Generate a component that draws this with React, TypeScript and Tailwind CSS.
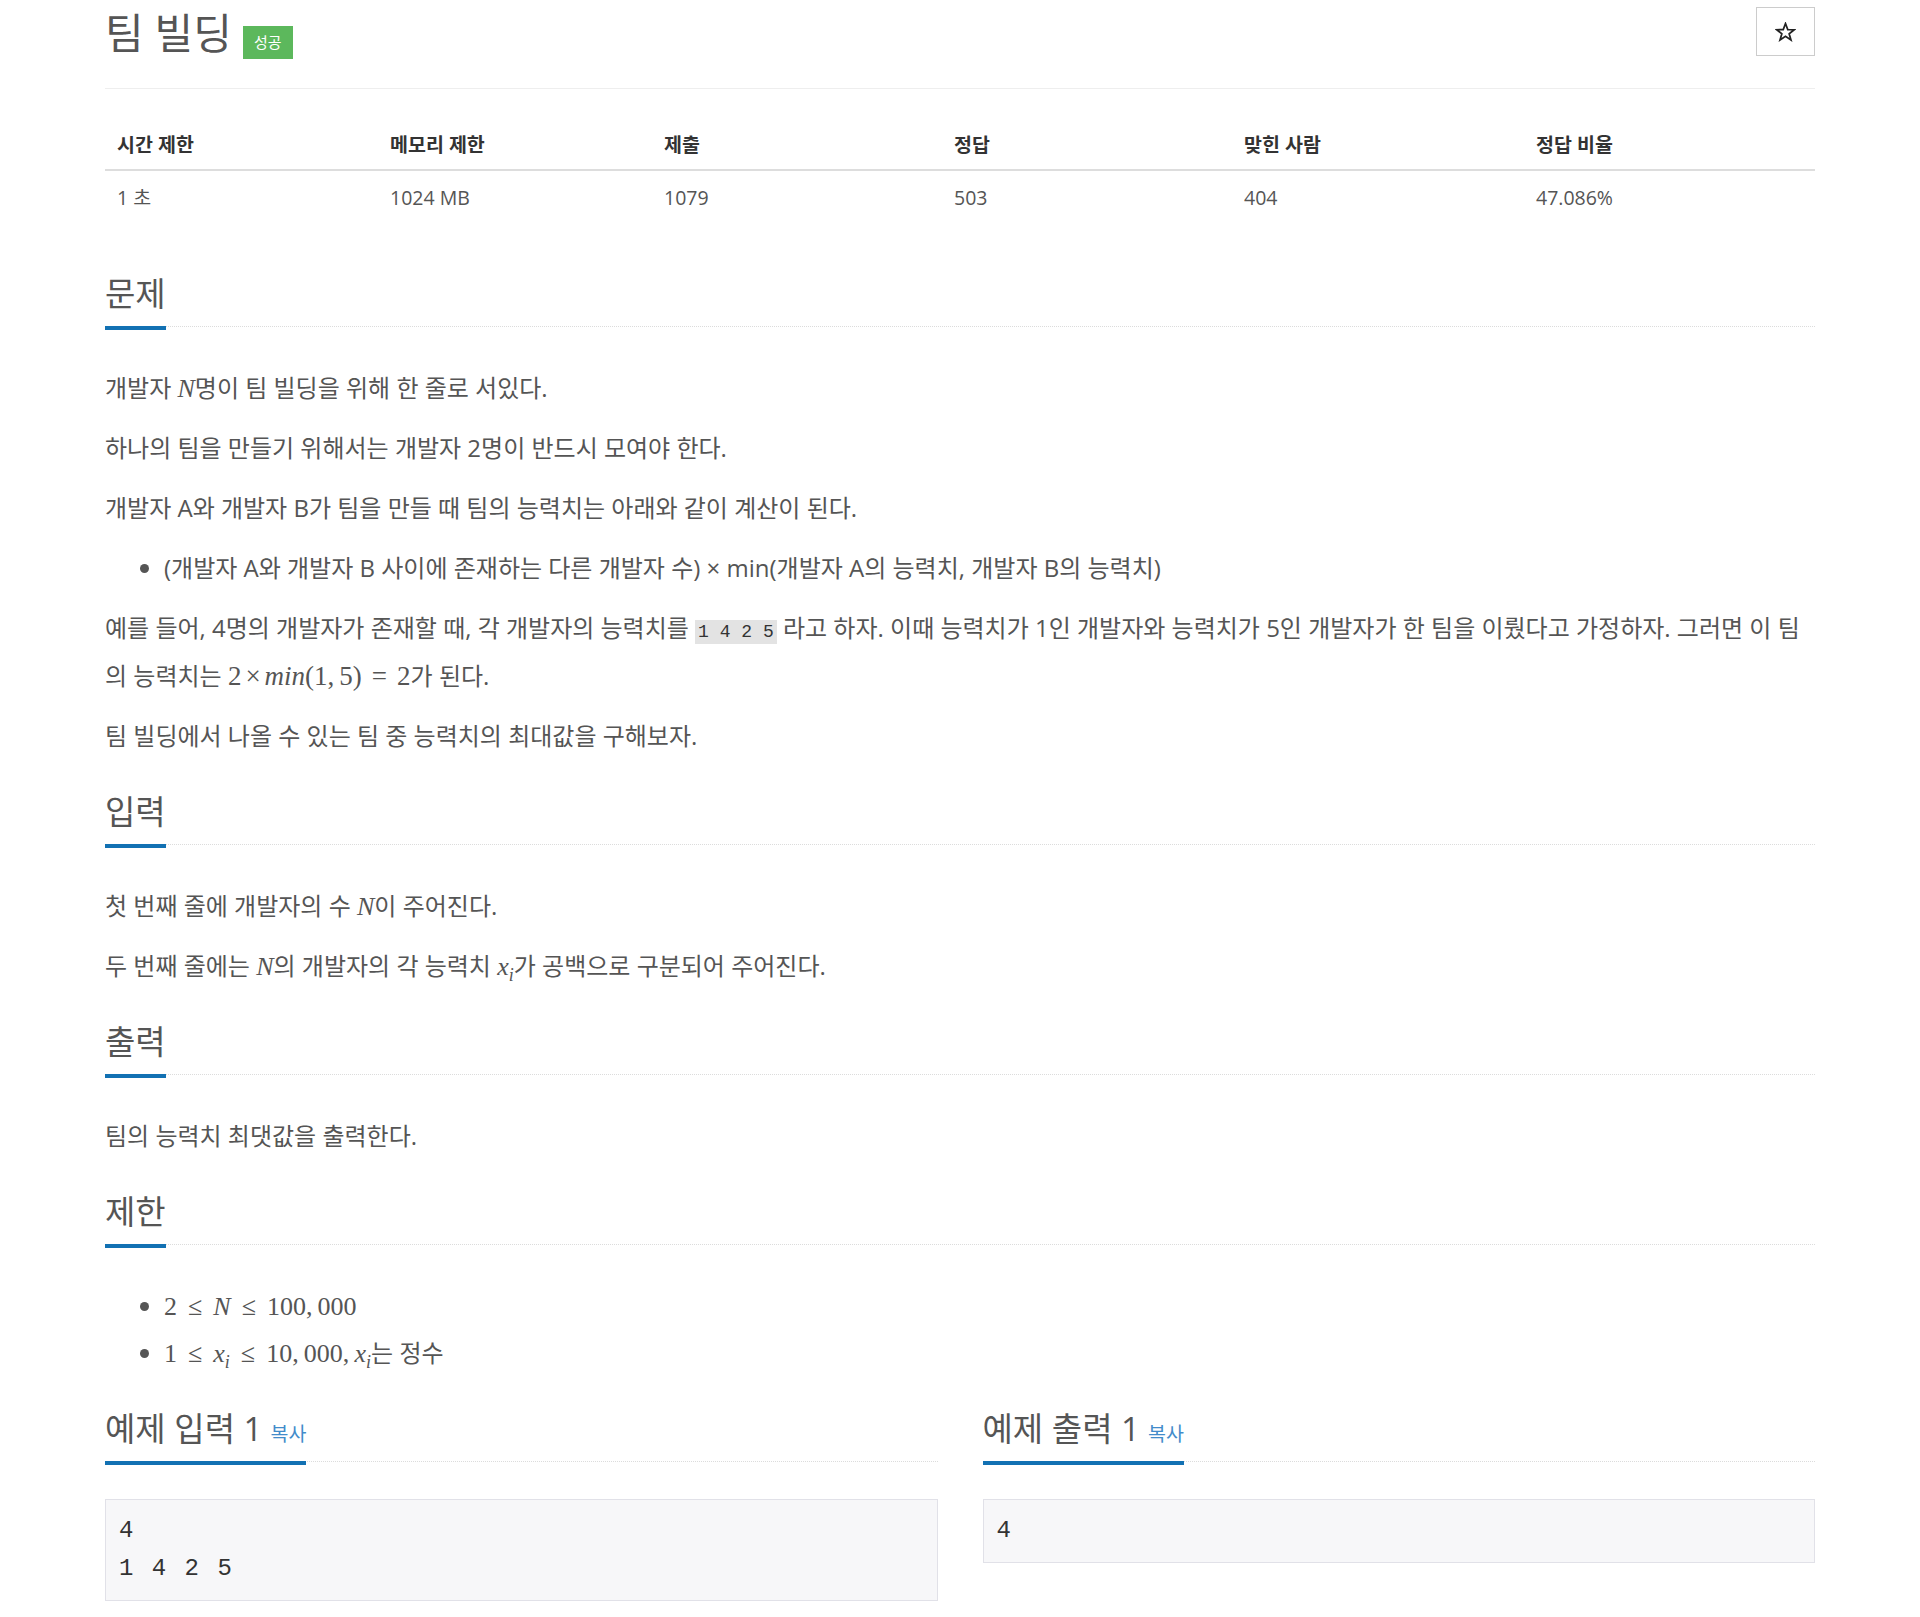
import type { ReactNode } from "react";

const SANS = "font-['Open_Sans','Noto_Sans_CJK_KR',sans-serif]";
const SERIF = "font-['Liberation_Serif','Times_New_Roman',serif]";

function M({ children }: { children: ReactNode }) {
  return <span className={`${SERIF} text-[26px] leading-none`}>{children}</span>;
}

function V({ children }: { children: ReactNode }) {
  return <i className={`${SERIF} text-[26px] leading-none`}>{children}</i>;
}

function Xi() {
  return (
    <span className={`${SERIF} text-[26px] leading-none`}>
      <i>x</i>
      <i className="align-sub text-[18px] leading-none">i</i>
    </span>
  );
}

// relation sign with TeX-like thick spacing
function Rel({ children }: { children: ReactNode }) {
  return <span className="px-[11px]">{children}</span>;
}

function Headline({ children }: { children: ReactNode }) {
  return (
    <div className="mt-[20px] mb-[37px] flex border-b border-dotted border-[#dcdcdc]">
      <h2 className="-mb-[4px] border-b-4 border-[#1271b3] pb-[12px] text-[33px] leading-[40px] text-[#555]">
        {children}
      </h2>
    </div>
  );
}

function Copy() {
  return <a className="ml-[8px] cursor-pointer text-[19.5px] leading-none text-[#428bca]">복사</a>;
}

const heads = ["시간 제한", "메모리 제한", "제출", "정답", "맞힌 사람", "정답 비율"];
const vals = ["1 초", "1024 MB", "1079", "503", "404", "47.086%"];

export default function App() {
  return (
    <div className={`${SANS} min-h-[1617px] bg-white px-[105px] text-[#555]`}>
      <div className="flex h-[89px] items-start justify-between border-b border-[#eee]">
        <div className="flex items-start">
          <h1 className="mt-[10px] text-[42px] leading-[46px] text-[#555]">팀 빌딩</h1>
          <span className="mt-[26px] ml-[11px] flex h-[33px] w-[50px] items-center justify-center bg-[#5cb85c] text-[15px] text-white">
            성공
          </span>
        </div>
        <button className="mt-[7px] flex h-[49px] w-[59px] items-center justify-center border border-[#ccc] bg-white">
          <svg width="21" height="20" viewBox="0 0 24 23" fill="none" stroke="#222" strokeWidth="2" strokeLinejoin="miter">
            <path d="M12 1.8 L14.6 8.7 L22 8.9 L16.2 13.5 L18.3 20.7 L12 16.5 L5.7 20.7 L7.8 13.5 L2 8.9 L9.4 8.7 Z" />
          </svg>
        </button>
      </div>

      <div className="mt-[31px] mb-[33px] grid grid-cols-[273px_274px_290px_290px_292px_1fr] text-[19.5px] leading-[25px]">
        {heads.map((h) => (
          <div key={h} className="border-b-2 border-[#ddd] px-[12px] py-[12px] font-bold text-[#333]">
            {h}
          </div>
        ))}
        {vals.map((v) => (
          <div key={v} className="px-[12px] pt-[14px] pb-[11px] text-[#555]">
            {v}
          </div>
        ))}
      </div>

      <div className="flex flex-col text-[24px] leading-[47.5px]">
        <Headline>문제</Headline>
        <p className="mb-[12.5px]">
          개발자 <V>N</V>명이 팀 빌딩을 위해 한 줄로 서있다.
        </p>
        <p className="mb-[12.5px]">하나의 팀을 만들기 위해서는 개발자 2명이 반드시 모여야 한다.</p>
        <p className="mb-[12.5px]">개발자 A와 개발자 B가 팀을 만들 때 팀의 능력치는 아래와 같이 계산이 된다.</p>
        <ul className="mb-[12.5px] list-disc pl-[59px]">
          <li>(개발자 A와 개발자 B 사이에 존재하는 다른 개발자 수) × min(개발자 A의 능력치, 개발자 B의 능력치)</li>
        </ul>
        <p className="mb-[12.5px] whitespace-nowrap">
          예를 들어, 4명의 개발자가 존재할 때, 각 개발자의 능력치를{" "}
          <code className="bg-[#e3e3e3] px-[3px] py-[2px] font-['Liberation_Mono',monospace] text-[18px] leading-none text-[#333]">
            1 4 2 5
          </code>{" "}
          라고 하자. 이때 능력치가 1인 개발자와 능력치가 5인 개발자가 한 팀을 이뤘다고 가정하자. 그러면 이 팀
          <br />의 능력치는{" "}
          <span className={`${SERIF} text-[27px] leading-none`}>
            2<span className="px-[4px]">×</span>
            <i>min</i>(1,<span className="pl-[5px]">5</span>)<span className="px-[10px]">=</span>2
          </span>
          가 된다.
        </p>
        <p className="mb-[12.5px]">팀 빌딩에서 나올 수 있는 팀 중 능력치의 최대값을 구해보자.</p>

        <Headline>입력</Headline>
        <p className="mb-[12.5px]">
          첫 번째 줄에 개발자의 수 <V>N</V>이 주어진다.
        </p>
        <p className="mb-[12.5px]">
          두 번째 줄에는 <V>N</V>의 개발자의 각 능력치 <Xi />가 공백으로 구분되어 주어진다.
        </p>

        <Headline>출력</Headline>
        <p className="mb-[12.5px]">팀의 능력치 최댓값을 출력한다.</p>

        <Headline>제한</Headline>
        <ul className="mb-[12.5px] list-disc pl-[59px]">
          <li>
            <M>
              2<Rel>≤</Rel>
              <i>N</i>
              <Rel>≤</Rel>100,&thinsp;000
            </M>
          </li>
          <li>
            <M>
              1<Rel>≤</Rel>
            </M>
            <Xi />
            <M>
              <Rel>≤</Rel>10,&thinsp;000,&thinsp;
            </M>
            <Xi />는 정수
          </li>
        </ul>

        <div className="grid grid-cols-2 gap-x-[45px]">
          <div className="flex flex-col">
            <Headline>
              예제 입력 1<Copy />
            </Headline>
            <pre className="m-0 border border-[#e1e1e8] bg-[#f7f7f9] px-[13px] py-[12px] font-['Liberation_Mono',monospace] text-[24px] leading-[38px] tracking-[2px] text-[#333]">
              {"4\n1 4 2 5"}
            </pre>
          </div>
          <div className="flex flex-col">
            <Headline>
              예제 출력 1<Copy />
            </Headline>
            <pre className="m-0 border border-[#e1e1e8] bg-[#f7f7f9] px-[13px] py-[12px] font-['Liberation_Mono',monospace] text-[24px] leading-[38px] tracking-[2px] text-[#333]">
              {"4"}
            </pre>
          </div>
        </div>
      </div>
    </div>
  );
}
